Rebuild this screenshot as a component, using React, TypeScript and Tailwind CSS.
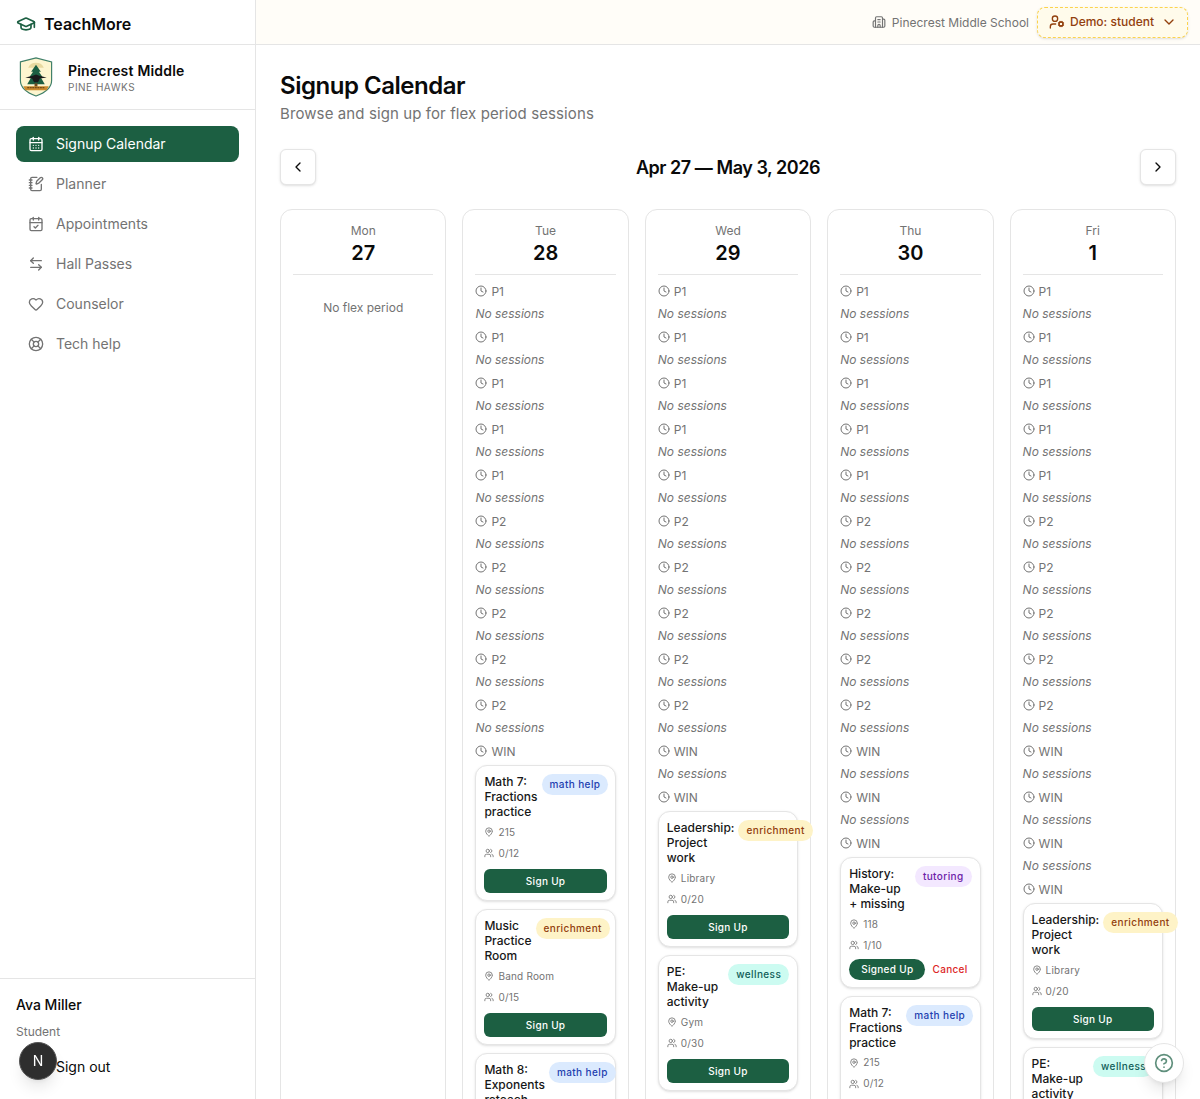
import React from 'react';
import {
  ArrowLeftRight,
  Building2,
  CalendarCheck,
  CalendarDays,
  ChevronDown,
  ChevronLeft,
  ChevronRight,
  CircleHelp,
  Clock,
  GraduationCap,
  Heart,
  LifeBuoy,
  MapPin,
  NotebookPen,
  UserCog,
  Users,
} from 'lucide-react';

const navItems = [
  { icon: CalendarDays, label: 'Signup Calendar', active: true },
  { icon: NotebookPen, label: 'Planner' },
  { icon: CalendarCheck, label: 'Appointments' },
  { icon: ArrowLeftRight, label: 'Hall Passes' },
  { icon: Heart, label: 'Counselor' },
  { icon: LifeBuoy, label: 'Tech help' },
];

const badgeStyles: Record<string, string> = {
  'math help': 'bg-[#dbeafe] text-[#1e40af]',
  enrichment: 'bg-[#fef3c7] text-[#92400e]',
  wellness: 'bg-[#ccfbf1] text-[#115e59]',
  tutoring: 'bg-[#f3e8ff] text-[#6b21a8]',
};

type Session = {
  title: string;
  tag: string;
  room: string;
  seats: string;
  signedUp?: boolean;
};

const math7: Session = { title: 'Math 7: Fractions practice', tag: 'math help', room: '215', seats: '0/12' };
const music: Session = { title: 'Music Practice Room', tag: 'enrichment', room: 'Band Room', seats: '0/15' };
const math8: Session = { title: 'Math 8: Exponents reteach', tag: 'math help', room: '215', seats: '0/12' };
const leadership: Session = { title: 'Leadership: Project work', tag: 'enrichment', room: 'Library', seats: '0/20' };
const pe: Session = { title: 'PE: Make-up activity', tag: 'wellness', room: 'Gym', seats: '0/30' };
const history: Session = { title: 'History: Make-up + missing', tag: 'tutoring', room: '118', seats: '1/10', signedUp: true };

const baseRows = ['P1', 'P1', 'P1', 'P1', 'P1', 'P2', 'P2', 'P2', 'P2', 'P2'];

const days = [
  { name: 'Tue', date: 28, emptyWins: 0, sessions: [math7, music, math8] },
  { name: 'Wed', date: 29, emptyWins: 1, sessions: [leadership, pe, math8] },
  { name: 'Thu', date: 30, emptyWins: 2, sessions: [history, math7] },
  { name: 'Fri', date: 1, emptyWins: 3, sessions: [leadership, pe] },
];

function Crest() {
  return (
    <svg viewBox="1 0 34 41" className="h-[40px] w-[36px] shrink-0">
      <path d="M2 5 L18 1 L34 5 V24 C34 32 26 37 18 40 C10 37 2 32 2 24 Z" fill="#fdf5cf" stroke="#3f7f68" strokeWidth="1.2" />
      <path d="M18 6 C14 6 11 8 10 11 L26 11 C25 8 22 6 18 6 Z" fill="#e8d9a0" />
      <path d="M18 8 L23 15 H21 L25 21 H23 L27 28 H9 L13 21 H11 L15 15 H13 Z" fill="#1c5f42" />
      <rect x="16.5" y="27" width="3" height="4" fill="#6b4a22" />
      <path d="M7 21 L14 19.5 L18 18 L22 19.5 L29 21 L22 22 L20 26 H16 L14 22 Z" fill="#1a1a1a" />
      <path d="M5 30 H31 L29 34 H7 Z" fill="#c98a2e" />
      <path d="M9 31.5 H27" stroke="#5a3a12" strokeWidth="1" strokeDasharray="2 0.6" />
    </svg>
  );
}

function Sidebar() {
  return (
    <aside className="flex h-full w-[256px] shrink-0 flex-col border-r border-[#e5e5e5] bg-white">
      <div className="flex h-[45px] items-center gap-2 border-b border-[#e5e5e5] px-4 pt-1">
        <GraduationCap className="h-5 w-5 text-[#1c5f42]" />
        <span className="text-base font-semibold text-[#0a0a0a]">TeachMore</span>
      </div>
      <div className="flex h-[65px] items-center gap-[14px] border-b border-[#e5e5e5] pl-[18px]">
        <Crest />
        <div className="pt-0.5">
          <p className="text-sm leading-[18px] font-semibold tracking-[0.2px] text-[#0a0a0a]">Pinecrest Middle</p>
          <p className="text-[10px] leading-[14px] tracking-wider text-[#737373]">PINE HAWKS</p>
        </div>
      </div>
      <nav className="flex flex-1 flex-col gap-1 p-4">
        {navItems.map((item) => {
          const Icon = item.icon;
          return (
            <div
              key={item.label}
              className={
                item.active
                  ? 'flex h-9 items-center gap-3 rounded-lg bg-[#1c5f42] px-3 text-sm text-white'
                  : 'flex h-9 items-center gap-3 rounded-lg px-3 text-sm text-[#737373]'
              }
            >
              <Icon className="h-4 w-4" />
              {item.label}
            </div>
          );
        })}
      </nav>
      <div className="h-[121px] border-t border-[#e5e5e5] px-4 pt-4">
        <p className="text-sm leading-5 font-medium text-[#0a0a0a]">Ava Miller</p>
        <p className="mt-[9px] text-xs leading-4 text-[#737373]">Student</p>
        <p className="mt-[17px] pl-10 text-sm leading-5 text-[#0a0a0a]">Sign out</p>
      </div>
    </aside>
  );
}

function SessionCard({ session }: { session: Session }) {
  return (
    <div className="rounded-xl border border-[#e5e5e5] bg-white p-2 shadow-sm">
      <div className="flex items-start justify-between gap-1">
        <p className="text-xs leading-[15px] font-medium text-[#171717]">
          {session.title.split(' ').map((word, i) => (
            <React.Fragment key={i}>
              <span className="whitespace-nowrap">{word}</span>{' '}
            </React.Fragment>
          ))}
        </p>
        <span className={`shrink-0 rounded-full px-2 text-[10px] leading-[21px] font-medium tracking-[0.4px] ${badgeStyles[session.tag]}`}>
          {session.tag}
        </span>
      </div>
      <div className="mt-[5px] flex h-4 items-center gap-1 text-[10px] tracking-[0.2px] text-[#737373]">
        <MapPin className="h-2.5 w-2.5" />
        {session.room}
      </div>
      <div className="mt-[5px] flex h-4 items-center gap-1 text-[10px] tracking-[0.2px] text-[#737373]">
        <Users className="h-2.5 w-2.5" />
        {session.seats}
      </div>
      {session.signedUp ? (
        <div className="mt-[5.5px] -mb-px flex items-center justify-between">
          <span className="rounded-full bg-[#1c5f42] px-3 text-[10px] leading-[21px] font-medium tracking-[0.3px] text-white">Signed Up</span>
          <span className="pr-1 text-[10px] font-medium tracking-[0.3px] text-[#dc2626]">Cancel</span>
        </div>
      ) : (
        <button className="mt-2 -mb-px h-6 w-full rounded-md bg-[#1c5f42] text-[10px] font-medium tracking-[0.3px] text-white">Sign Up</button>
      )}
    </div>
  );
}

function PeriodLabel({ label }: { label: string }) {
  return (
    <div className="flex h-4 items-center gap-1 text-xs leading-[18px] text-[#737373]">
      <Clock className="h-3 w-3" />
      <span className="h-4">{label}</span>
    </div>
  );
}

function DayColumn({ day }: { day: (typeof days)[number] }) {
  const emptyRows = [...baseRows, ...Array(day.emptyWins).fill('WIN')];
  return (
    <div className="min-w-0 rounded-xl border border-[#e5e5e5] bg-white p-3">
      <DayHead name={day.name} date={day.date} />
      <div className="flex flex-col gap-2">
        {emptyRows.map((label, i) => (
          <div key={i} className="flex flex-col gap-1.5">
            <PeriodLabel label={label} />
            <p className="h-4 text-xs leading-[18px] text-[#737373] italic">No sessions</p>
          </div>
        ))}
        <div className="flex flex-col gap-1.5">
          <PeriodLabel label="WIN" />
          <div className="flex flex-col gap-2">
            {day.sessions.map((s, i) => (
              <SessionCard key={i} session={s} />
            ))}
          </div>
        </div>
      </div>
    </div>
  );
}

function DayHead({ name, date }: { name: string; date: number }) {
  return (
    <div className="mb-2 border-b border-[#e5e5e5] pb-2 text-center">
      <p className="h-4 text-xs leading-[18px] text-[#737373]">{name}</p>
      <p className="h-7 text-xl leading-[30px] font-semibold text-[#0a0a0a]">{date}</p>
    </div>
  );
}

export default function App() {
  return (
    <div className="flex h-screen overflow-hidden bg-white font-['Inter',sans-serif]">
      <Sidebar />
      <div className="flex min-w-0 flex-1 flex-col">
        <header className="flex h-[45px] shrink-0 items-center justify-end gap-2 border-b border-[#e5e5e5] bg-[#fffdf8] pr-3">
          <Building2 className="h-3.5 w-3.5 text-[#737373]" />
          <span className="-ml-0.5 h-4 text-xs leading-[18px] text-[#737373]">Pinecrest Middle School</span>
          <div className="flex h-[31px] w-[151px] items-center gap-[5px] rounded-lg border border-dashed border-[#fcd34d] bg-[#fffbeb] pr-2.5 pl-[11px] text-xs leading-[18px] font-medium whitespace-nowrap text-[#92400e] shadow-sm">
            <UserCog className="h-4 w-4 shrink-0" />
            Demo: student
            <ChevronDown className="ml-auto h-4 w-4 shrink-0" />
          </div>
        </header>
        <main className="min-h-0 flex-1 overflow-hidden p-6">
          <h1 className="h-8 text-2xl leading-[34px] font-semibold tracking-[-0.02em] text-[#0a0a0a]">Signup Calendar</h1>
          <p className="h-6 text-[15px] leading-[26px] tracking-[0.1px] text-[#737373]">Browse and sign up for flex period sessions</p>
          <div className="mt-6 mb-6 flex items-center justify-between">
            <button className="flex h-9 w-9 items-center justify-center rounded-md border border-[#e5e5e5] bg-white text-[#0a0a0a] shadow-sm">
              <ChevronLeft className="h-4 w-4" />
            </button>
            <h2 className="h-7 text-lg leading-[30px] font-semibold tracking-tight text-[#0a0a0a]">Apr 27 — May 3, 2026</h2>
            <button className="flex h-9 w-9 items-center justify-center rounded-md border border-[#e5e5e5] bg-white text-[#0a0a0a] shadow-sm">
              <ChevronRight className="h-4 w-4" />
            </button>
          </div>
          <div className="grid grid-cols-5 gap-4">
            <div className="min-w-0 rounded-xl border border-[#e5e5e5] bg-white p-3">
              <DayHead name="Mon" date={27} />
              <p className="py-4 text-center text-xs leading-[18px] text-[#737373]">No flex period</p>
            </div>
            {days.map((day) => (
              <DayColumn key={day.name} day={day} />
            ))}
          </div>
        </main>
      </div>

      {/* dev indicator + help button sit over the page */}
      <div className="fixed bottom-[19px] left-[19px] flex h-[38px] w-[38px] items-center justify-center rounded-full border border-[#555] bg-[#2e2e2e] text-sm text-white shadow-lg">
        N
      </div>
      <div className="fixed right-4 bottom-4 flex h-10 w-10 items-center justify-center rounded-full border border-[#e5e5e5] bg-white shadow-lg">
        <CircleHelp className="h-5 w-5 text-[#5f8f7c]" />
      </div>
    </div>
  );
}
